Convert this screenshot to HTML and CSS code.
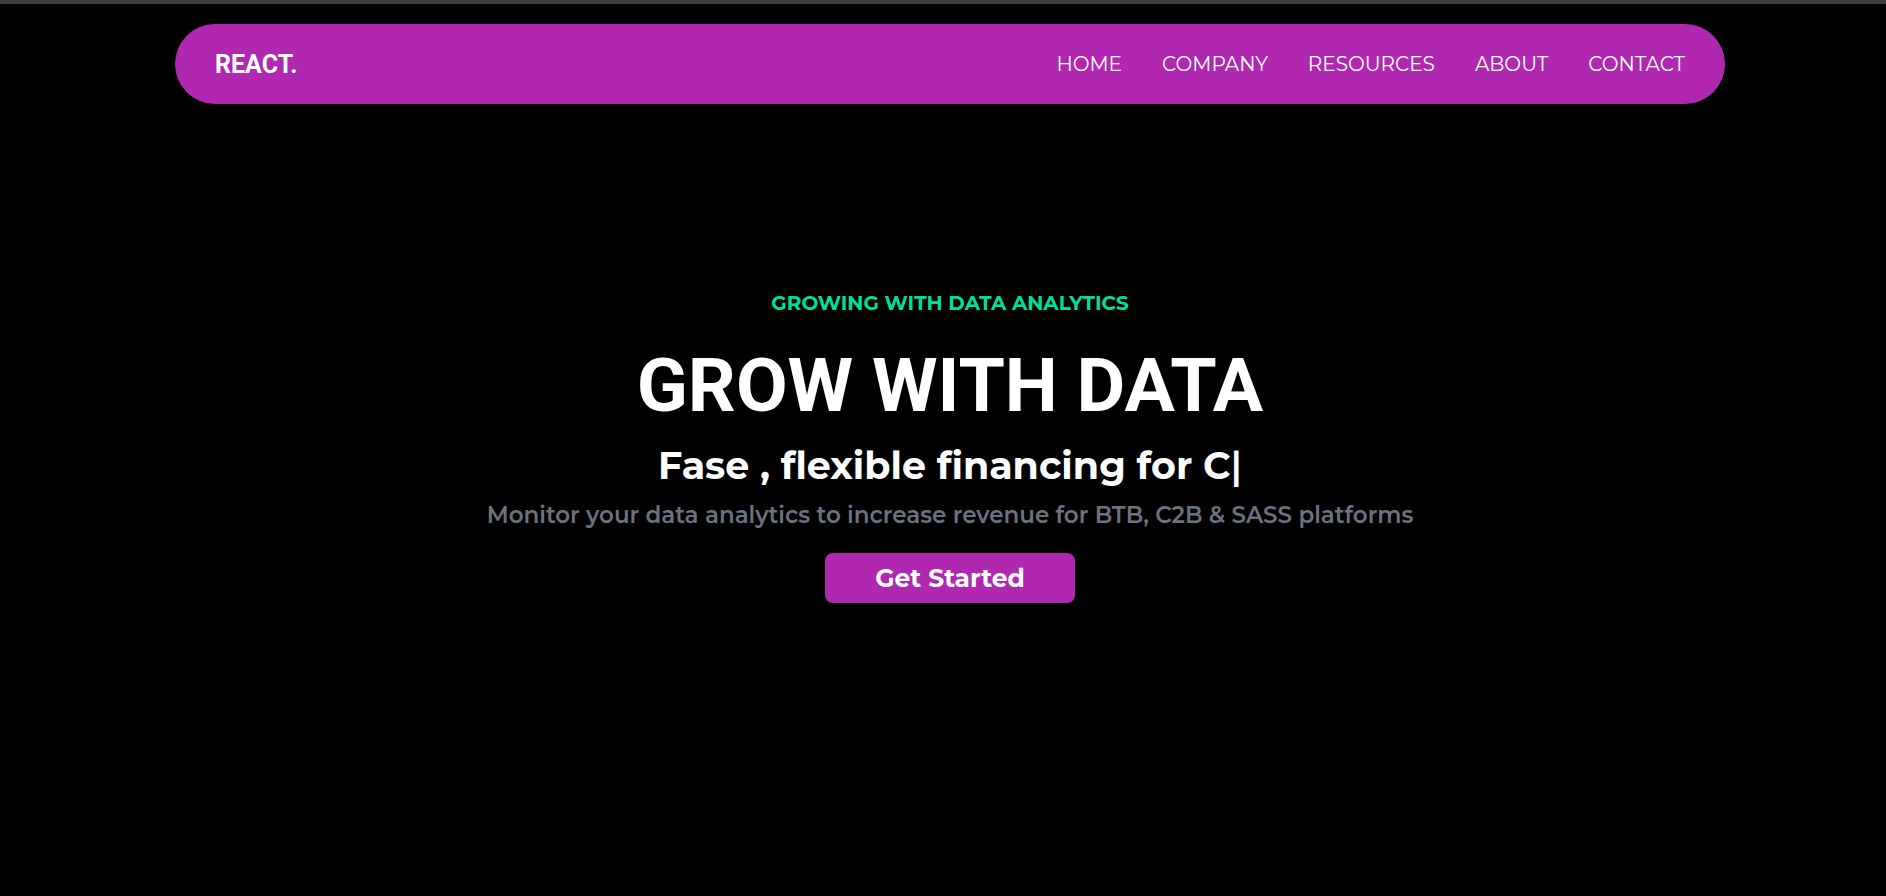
FILE: index.html
```html
<!DOCTYPE html>
<html lang="en">
<head>
<meta charset="utf-8">
<meta name="viewport" content="width=device-width, initial-scale=1">
<title>React.</title>
<link rel="stylesheet" href="styles.css">
</head>
<body>
<div class="page">
  <header class="navbar">
    <a class="brand" href="#">REACT.</a>
    <nav>
      <ul class="menu">
        <li><a href="#home">HOME</a></li>
        <li><a href="#company">COMPANY</a></li>
        <li><a href="#resources">RESOURCES</a></li>
        <li><a href="#about">ABOUT</a></li>
        <li><a href="#contact">CONTACT</a></li>
      </ul>
    </nav>
  </header>
  <main class="hero">
    <p class="eyebrow">GROWING WITH DATA ANALYTICS</p>
    <h1 class="title">GROW WITH DATA</h1>
    <p class="typed">Fase , flexible financing for C<span class="cursor">|</span></p>
    <p class="lead">Monitor your data analytics to increase revenue for BTB, C2B &amp; SASS platforms</p>
    <button class="cta" type="button">Get Started</button>
  </main>
</div>
</body>
</html>
```
FILE: styles.css
```css
* {
  box-sizing: border-box;
  margin: 0;
  padding: 0;
}

body {
  min-height: 100vh;
  background: #000;
  color: #fff;
  font-family: Montserrat, Inter, sans-serif;
  border-top: 4px solid #3c3c3c;
}

.page {
  padding: 20px 0 0 14px;
}

.navbar {
  display: flex;
  align-items: center;
  justify-content: space-between;
  max-width: 1550px;
  height: 80px;
  margin: 0 auto;
  padding: 0 40px;
  border-radius: 40px;
  background: #b028b0;
}

.brand {
  color: #fff;
  font: 700 25px/33px Roboto, sans-serif;
  text-decoration: none;
}

.menu {
  display: flex;
  gap: 40px;
  list-style: none;
}

.menu a {
  color: #fff;
  font-size: 20px;
  font-weight: 400;
  line-height: 28px;
  text-decoration: none;
}

.hero {
  display: flex;
  flex-direction: column;
  align-items: center;
  padding-top: 184px;
  text-align: center;
}

.eyebrow {
  color: #00df9a;
  font-size: 20px;
  font-weight: 700;
  line-height: 30px;
}

.title {
  margin-top: 25px;
  font: 700 75px/84px Roboto, sans-serif;
}

.typed {
  margin-top: 9px;
  font-size: 38px;
  font-weight: 700;
  line-height: 60px;
}

.cursor {
  font-weight: 600;
}

.lead {
  margin-top: 3px;
  color: #6b7280;
  font-size: 23px;
  font-weight: 600;
  line-height: 32px;
}

.cta {
  width: 250px;
  height: 50px;
  margin-top: 22px;
  border: 0;
  border-radius: 8px;
  background: #b028b0;
  color: #fff;
  font: 700 25px/32px Montserrat, Inter, sans-serif;
  cursor: pointer;
}
```
